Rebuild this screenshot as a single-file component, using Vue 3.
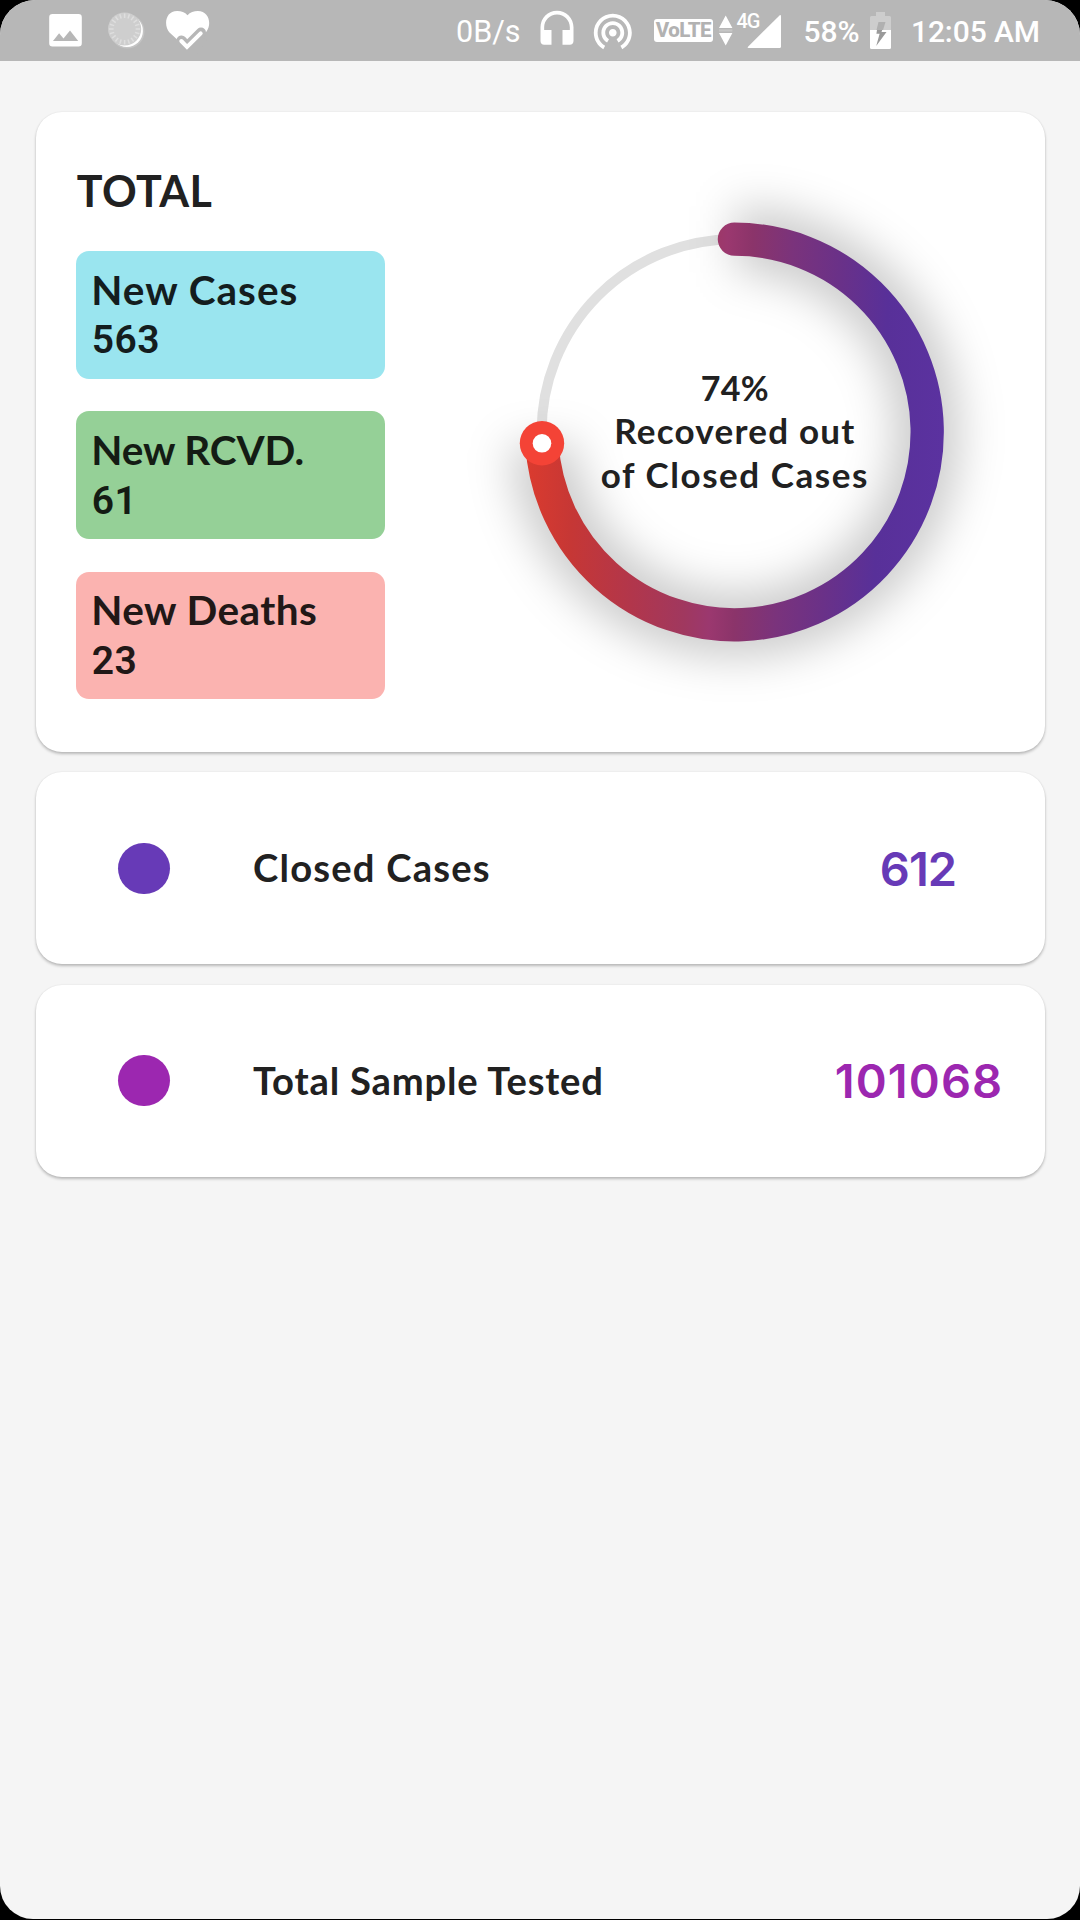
<script setup>
const chips = [
  { label: 'New Cases', value: '563', tone: 'cyan' },
  { label: 'New RCVD.', value: '61', tone: 'green' },
  { label: 'New Deaths', value: '23', tone: 'red' },
]
const rows = [
  { label: 'Closed Cases', value: '612', tone: 'violet' },
  { label: 'Total Sample Tested', value: '101068', tone: 'purple' },
]

// Progress ring geometry
const cx = 254.4
const cy = 272
const r = 192.8
const angle = 0.74 * 2 * Math.PI
const endX = cx + r * Math.sin(angle)
const endY = cy - r * Math.cos(angle)
const arc = `M${cx} ${cy - r}A${r} ${r} 0 1 1 ${endX} ${endY}`

const ticks = Array.from({ length: 20 }, (_, i) => i * 18)
</script>

<template>
  <div class="device">
    <div class="screen">
      <header class="status">
        <svg class="image" viewBox="49 0 33 61" width="33" height="61">
          <path fill="#fff" fill-rule="evenodd" d="M52.5 14h26a3.3 3.3 0 0 1 3.300 3.300v26a3.300 3.300 0 0 1-3.300 3.300h-26a3.300 3.300 0 0 1-3.300-3.300v-26a3.300 3.300 0 0 1 3.300-3.300zM53 41h25.200l-8.200-10.600-6.500 8.200-4.400-5.400z" />
        </svg>
        <svg class="sync" viewBox="105 0 42 61" width="42" height="61">
          <circle cx="127.300" cy="31.300" r="17.200" fill="#c4c4c4" />
          <circle cx="126.900" cy="30.900" r="16" fill="#fff" />
          <circle cx="124.600" cy="29" r="16.600" fill="#cecece" />
          <g stroke="#dedede" stroke-width="1.500">
            <line v-for="t in ticks" :key="t" x1="124.600" y1="13.500" x2="124.600" y2="18" :transform="`rotate(${t} 124.6 29)`" />
          </g>
        </svg>
        <svg class="heart" viewBox="164 0 48 61" width="48" height="61">
          <path fill="#fff" d="M187.500 49L169.500 32.500C163.500 25.500 165 11 177.200 11c4 0 7.800 1.400 10.300 4.200C190 12.400 194 11 197.800 11 209 11 212 24 206.500 31.500z" />
          <path class="tick-gap" d="M181.500 40.500l5.500 6 14-14" />
          <path fill="#b7b7b7" d="M183 47l4 4 14-14 6 3-10 14h-14z" />
          <path class="tick" d="M181.300 41l5.700 6 13.700-13.700" />
        </svg>
        <span class="speed">0B/s</span>
        <svg class="phones" viewBox="0 0 24 24" width="44" height="44">
          <path fill="#fff" d="M12 1c-4.970 0-9 4.030-9 9v7.500c0 1.200.8 2 2 2h4v-8H5v-1.500c0-3.870 3.130-7 7-7s7 3.130 7 7v1.500h-4v8h4c1.200 0 2-.8 2-2V10c0-4.970-4.030-9-9-9z" />
        </svg>
        <svg class="cast" viewBox="0 0 24 24" width="45.600" height="45.600">
          <path fill="#fff" d="M12 11c-1.100 0-2 .9-2 2s.9 2 2 2 2-.9 2-2-.9-2-2-2zm6 2c0-3.310-2.690-6-6-6s-6 2.690-6 6c0 2.220 1.210 4.150 3 5.190l1-1.740c-1.190-.7-2-1.970-2-3.450 0-2.210 1.790-4 4-4s4 1.790 4 4c0 1.480-.81 2.750-2 3.450l1 1.740c1.790-1.040 3-2.970 3-5.190zM12 3C6.480 3 2 7.480 2 13c0 3.700 2.010 6.920 4.990 8.650l1-1.730C5.610 18.530 4 15.960 4 13c0-4.420 3.580-8 8-8s8 3.580 8 8c0 2.960-1.610 5.530-4 6.920l1 1.730c2.990-1.730 5-4.950 5-8.650 0-5.520-4.480-10-10-10z" />
        </svg>
        <span class="volte">VoLTE</span>
        <svg class="arrows" viewBox="718 0 15 61" width="15" height="61">
          <path fill="#fff" d="M719 28h13.400L725.700 15.500zM719 33h13.400L725.700 45.500z" />
          <path fill="#c6c6c6" d="M719 29.300h13.400v2.200H719z" />
        </svg>
        <span class="gen">4G</span>
        <svg class="signal" viewBox="747 0 34 61" width="34" height="61">
          <path fill="#fff" d="M748.500 48q-1.500 0-.5-1.300L779.500 15.400q1.500-1 1.500.9v30.200q0 1.500-1.500 1.500z" />
        </svg>
        <span class="percent">58%</span>
        <svg class="battery" viewBox="870 0 21 61" width="21" height="61">
          <path fill="#cdcdcd" d="M876 12h9v4h4.500q1.500 0 1.500 1.500V30h-21V17.500q0-1.500 1.500-1.500h4.500z" />
          <path fill="#fff" d="M870 30h21v17.500q0 1.500-1.500 1.500h-18q-1.500 0-1.500-1.500z" />
          <path fill="#b0b0b0" d="M878.500 22h7l-2.500 8h-6.500z" />
          <path fill="#9a9a9a" d="M877 30h3v3.800h-3.600zM880 30h2.200l-.7 2h5l-10.300 14 3.500-12.500z" />
        </svg>
        <span class="clock">12:05 AM</span>
      </header>

      <main>
        <section class="card summary">
          <div class="totals">
            <h1>TOTAL</h1>
            <div class="chips">
              <div v-for="c in chips" :key="c.label" class="chip" :class="c.tone">
                <span class="chip-label">{{ c.label }}</span>
                <span class="chip-value">{{ c.value }}</span>
              </div>
            </div>
          </div>
          <div class="chart">
            <svg class="ring" viewBox="0 0 508.800 560" width="508.800" height="560">
              <defs>
                <linearGradient id="ringFill" gradientUnits="userSpaceOnUse" x1="46" y1="262" x2="464" y2="282">
                  <stop offset="0" stop-color="#dc3b2e" />
                  <stop offset="0.120" stop-color="#c63735" />
                  <stop offset="0.270" stop-color="#b2364b" />
                  <stop offset="0.400" stop-color="#a0385f" />
                  <stop offset="0.460" stop-color="#9b386f" />
                  <stop offset="0.520" stop-color="#8b346a" />
                  <stop offset="0.620" stop-color="#7a337c" />
                  <stop offset="0.730" stop-color="#6a3188" />
                  <stop offset="0.850" stop-color="#583099" />
                  <stop offset="1" stop-color="#5b32a0" />
                </linearGradient>
                <filter id="soft" filterUnits="userSpaceOnUse" x="-80" y="-60" width="680" height="680">
                  <feGaussianBlur stdDeviation="22" />
                </filter>
              </defs>
              <circle :cx="cx" :cy="cy" :r="r" fill="none" stroke="#e0e0e0" stroke-width="10" />
              <path :d="arc" fill="none" stroke="#000" stroke-opacity="0.200" stroke-width="66" filter="url(#soft)" />
              <path :d="arc" fill="none" stroke="url(#ringFill)" stroke-width="33.300" stroke-linecap="round" />
              <circle :cx="endX" :cy="endY - 0.800" r="22.200" fill="#f44336" />
              <circle :cx="endX" :cy="endY - 0.800" r="9.300" fill="#fff" />
            </svg>
            <div class="caption">
              <span class="pct">74%</span>
              <span class="line-a">Recovered out</span>
              <span class="line-b">of Closed Cases</span>
            </div>
          </div>
        </section>

        <section v-for="row in rows" :key="row.label" class="card row" :class="row.tone">
          <i class="dot"></i>
          <span class="row-label">{{ row.label }}</span>
          <span class="row-value">{{ row.value }}</span>
        </section>
      </main>
    </div>
  </div>
</template>

<style>
body { margin: 0; background: #000; }
</style>

<style scoped>
.device { width: 1080px; height: 1920px; background: #000; overflow: hidden; }
.screen {
  height: 1919px;
  background: #f5f5f5;
  border-radius: 35px 35px 33px 33px;
  overflow: hidden;
  font-family: Lato, "Noto Sans", sans-serif;
  color: #212121;
}

.status {
  display: flex;
  align-items: flex-start;
  height: 61px;
  background: #b7b7b7;
  color: #fff;
  font-family: Roboto, "Liberation Sans", sans-serif;
  white-space: nowrap;
}
.status > * { flex: none; display: block; }
.image { margin-left: 49px; }
.sync { margin-left: 23px; }
.heart { margin-left: 17px; }
.tick-gap { fill: none; stroke: #b7b7b7; stroke-width: 10; stroke-linecap: round; stroke-linejoin: round; }
.tick { fill: none; stroke: #fff; stroke-width: 4; stroke-linecap: round; stroke-linejoin: miter; }
.speed { width: 78.500px; margin-left: 244px; font-size: 30.500px; line-height: 64px; }
.phones { margin-top: 9px; }
.cast { margin: 8px 0 0 11.700px; }
.volte {
  box-sizing: border-box;
  width: 59px;
  height: 23px;
  margin: 19px 0 0 18.200px;
  border-radius: 3px;
  background: #fff;
  color: #b2b2b2;
  font-size: 20.500px;
  font-weight: 800;
  line-height: 23px;
  letter-spacing: -0.500px;
  text-align: center;
}
.arrows { margin-left: 5px; }
.gen { width: 11px; margin: 10px 0 0 3.500px; font-size: 20px; font-weight: 500; line-height: 23px; letter-spacing: -1.200px; }
.signal { margin-left: 0; }
.percent { width: 66.500px; margin-left: 22px; font-size: 30px; font-weight: 500; line-height: 63px; }
.battery { margin-left: 0; }
.clock { margin-left: 20px; font-size: 30px; font-weight: 500; line-height: 63px; letter-spacing: -0.100px; }

main {
  display: flex;
  flex-direction: column;
  gap: 20.300px;
  padding: 51px 35.500px 0;
}
.card {
  border-radius: 26px;
  background: #fff;
  box-shadow: 0 2px 3px rgba(0, 0, 0, 0.240), 0 0 2px rgba(0, 0, 0, 0.080);
}
.summary {
  box-sizing: border-box;
  display: flex;
  height: 640px;
  padding-left: 40.500px;
}
.totals { width: 309px; padding-top: 53px; }
h1 {
  margin: 0 0 34.300px 0.700px;
  font-size: 43px;
  font-weight: 700;
  line-height: 52px;
  letter-spacing: 0.450px;
}
.chips { display: flex; flex-direction: column; gap: 32.700px; }
.chip {
  box-sizing: border-box;
  display: flex;
  flex-direction: column;
  height: 127.500px;
  padding: 14.500px 0 0 15.300px;
  border-radius: 13px;
}
.chip-label { font-size: 40.500px; font-weight: 700; line-height: 48.600px; }
.chip-value {
  font-family: Roboto, "Liberation Sans", sans-serif;
  font-size: 39px;
  font-weight: 600;
  line-height: 52px;
  letter-spacing: 0.500px;
  padding-left: 0.500px;
}
.cyan { background: #9ae5ef; color: #141d1e; }
.green { background: #95d097; color: #141c14; }
.red { background: #fbb3b0; color: #211817; }
.cyan .chip-label { letter-spacing: 1px; }
.green .chip-label { letter-spacing: -0.100px; }
.red .chip-label { letter-spacing: 0.430px; }

.chart { display: grid; width: 508.800px; height: 560px; margin: 48px 0 0 95px; }
.ring, .caption { grid-area: 1 / 1; }
.ring { display: block; overflow: visible; }
.caption {
  z-index: 1;
  display: flex;
  flex-direction: column;
  align-items: center;
  padding: 206px 0 0 1px;
  font-size: 35px;
  font-weight: 700;
  line-height: 43.300px;
  white-space: nowrap;
}
.pct { font-size: 34px; letter-spacing: 0.300px; }
.line-a { letter-spacing: 1.250px; }
.line-b { letter-spacing: 1.550px; }

.row { display: flex; align-items: center; height: 192px; }
.dot { width: 51.500px; height: 51.500px; margin-left: 82.500px; border-radius: 50%; background: currentColor; }
.row-label {
  flex: 1;
  padding: 0 0 2px 83.500px;
  color: #212121;
  font-size: 38.200px;
  font-weight: 700;
  white-space: nowrap;
}
.row-value {
  width: 253px;
  font-family: Inter, "Liberation Sans", sans-serif;
  font-size: 47px;
  font-weight: 600;
  text-align: center;
}
.violet { color: #673ab7; }
.purple { color: #9c27b0; }
.violet .row-label { letter-spacing: 1.200px; }
.violet .row-value { letter-spacing: -0.900px; }
.purple .row-label { letter-spacing: 0.800px; }
.purple .row-value { letter-spacing: 1.100px; padding-left: 2px; width: 251px; }
</style>
